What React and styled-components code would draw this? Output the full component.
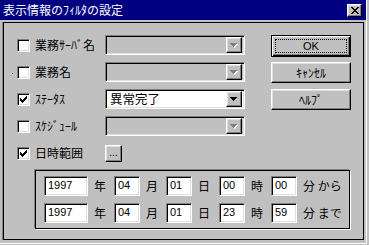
import React from 'react'
import styled, { createGlobalStyle, css } from 'styled-components'

const GlobalStyle = createGlobalStyle`
  * { box-sizing: border-box; }
  body {
    margin: 0;
    background: #c0c0c0;
    font-family: "Noto Sans CJK JP", "DejaVu Sans", sans-serif;
    font-size: 12px;
    color: #000;
  }
`

const sunken = css`
  border-top: 1px solid #808080;
  border-left: 1px solid #808080;
  border-right: 1px solid #fff;
  border-bottom: 1px solid #fff;
  box-shadow: inset 1px 1px 0 #000, inset -1px -1px 0 #dfdfdf;
`

const raised = css`
  border-top: 1px solid #fff;
  border-left: 1px solid #fff;
  border-right: 1px solid #000;
  border-bottom: 1px solid #000;
  box-shadow: inset -1px -1px 0 #808080, inset 1px 1px 0 #dfdfdf;
`

const Window = styled.div`
  width: 367px;
  height: 244px;
  background: #c0c0c0;
  border-right: 1px solid #fff;
  border-bottom: 1px solid #fff;
`

const TitleBar = styled.div`
  width: 366px;
  height: 20px;
  background: #000080;
  color: #fff;
  display: flex;
  align-items: center;
  justify-content: space-between;
  padding: 0 4px 0 3px;
  line-height: 1;
`

const TitleText = styled.span`
  font-size: 12px;
  letter-spacing: 0;
`

const CloseButton = styled.div`
  ${raised};
  width: 15px;
  height: 13px;
  background: #c0c0c0;
  display: flex;
  align-items: center;
  justify-content: center;
`

const Panel = styled.div`
  margin: 2px 0 0 3px;
  width: 361px;
  height: 218px;
  border: 1px solid #000;
  box-shadow: -1px 0 0 #808080;
  padding: 12px 0 0 13px;
`

const TopSection = styled.div`
  display: flex;
`

const FilterRows = styled.div`
  width: 228px;
  display: flex;
  flex-direction: column;
  gap: 7px;
`

const Row = styled.div`
  position: relative;
  display: flex;
  align-items: center;
  height: 20px;
`

const FocusDot = styled.span`
  position: absolute;
  left: -5px;
  top: 11px;
  width: 1px;
  height: 1px;
  background: #000;
`

const CheckBox = styled.div`
  ${sunken};
  width: 13px;
  height: 13px;
  background: #fff;
  flex: none;
  display: flex;
  align-items: center;
  justify-content: center;
`

const Label = styled.span`
  width: 70px;
  margin-left: 5px;
  line-height: 1;
  white-space: nowrap;
`

const Combo = styled.div`
  ${sunken};
  width: 140px;
  height: 20px;
  background: ${p => (p.$enabled ? '#fff' : '#c0c0c0')};
  display: flex;
  align-items: center;
  padding: 2px 2px 2px 4px;
`

const ComboText = styled.span`
  flex: 1;
  line-height: 1;
  font-size: 12.5px;
`

const ArrowButton = styled.div`
  ${raised};
  width: 16px;
  height: 16px;
  background: #c0c0c0;
  margin-left: auto;
  display: flex;
  align-items: center;
  justify-content: center;
`

const SmallButton = styled.div`
  ${raised};
  width: 17px;
  height: 17px;
  background: #c0c0c0;
  display: flex;
  align-items: flex-end;
  justify-content: center;
  padding-bottom: 3px;
  font-family: "Liberation Sans", sans-serif;
  font-size: 10px;
  line-height: 1;
`

const ButtonColumn = styled.div`
  margin-left: 26px;
  display: flex;
  flex-direction: column;
`

const PushButton = styled.div`
  ${raised};
  position: relative;
  width: 80px;
  height: 21px;
  margin-bottom: 6px;
  background: #c0c0c0;
  display: flex;
  align-items: center;
  justify-content: center;
  line-height: 1;
  font-family: ${p => (p.$latin ? '"Liberation Sans", sans-serif' : '"Noto Sans CJK JP", sans-serif')};
  font-size: ${p => (p.$latin ? '11px' : '12px')};
`

const DefaultButton = styled(PushButton)`
  height: 22px;
  margin-bottom: 5px;
  border: 1px solid #000;
  box-shadow: inset 1px 1px 0 #fff, inset -1px -1px 0 #000, inset -2px -2px 0 #808080;
  &::after {
    content: '';
    position: absolute;
    inset: 3px;
    border: 1px dotted #000;
  }
`

const DateBox = styled.div`
  margin: 7px 0 0 18px;
  width: 315px;
  height: 59px;
  border: 1px solid #000;
  box-shadow: 1px 1px 0 #fff, -1px -1px 0 #808080;
  padding: 5px 0 0 8px;
  display: flex;
  flex-direction: column;
  gap: 7px;
`

const DateRow = styled.div`
  display: flex;
  align-items: center;
  height: 20px;
`

const Field = styled.div`
  ${sunken};
  width: ${p => p.$w}px;
  height: 20px;
  background: #fff;
  padding: 3px 0 0 3px;
  font-family: "Liberation Sans", sans-serif;
  font-size: 11px;
  line-height: 1;
`

const Unit = styled.span`
  width: ${p => p.$w || 26}px;
  padding-left: 6px;
  line-height: 1;
  white-space: nowrap;
`

const Check = () => (
  <svg width="7" height="7" viewBox="0 0 7 7" shapeRendering="crispEdges">
    <path d="M6 0h1v3h-1zM5 1h1v3h-1zM4 2h1v3h-1zM0 2h1v3h-1zM1 3h1v3h-1zM2 4h1v3h-1zM3 3h1v3h-1z" fill="#000" />
  </svg>
)

const Arrow = ({ disabled }) => (
  <svg width="8" height="5" viewBox="0 0 8 5" shapeRendering="crispEdges">
    {disabled && <path d="M1 1h7v1h-7zM2 2h5v1h-5zM3 3h3v1h-3zM4 4h1v1h-1z" fill="#fff" />}
    <path d="M0 0h7v1h-7zM1 1h5v1h-5zM2 2h3v1h-3zM3 3h1v1h-1z" fill={disabled ? '#808080' : '#000'} />
  </svg>
)

const CloseIcon = () => (
  <svg width="8" height="7" viewBox="0 0 8 7" shapeRendering="crispEdges">
    <path d="M0 0h2v1h-2zM6 0h2v1h-2zM1 1h2v1h-2zM5 1h2v1h-2zM2 2h4v1h-4zM3 3h2v1h-2zM2 4h4v1h-4zM1 5h2v1h-2zM5 5h2v1h-2zM0 6h2v1h-2zM6 6h2v1h-2z" fill="#000" />
  </svg>
)

const filters = [
  { label: '業務ｻｰﾊﾞ名', checked: false },
  { label: '業務名', checked: false, focus: true },
  { label: 'ｽﾃｰﾀｽ', checked: true, value: '異常完了' },
  { label: 'ｽｹｼﾞｭｰﾙ', checked: false },
]

const dateRows = [
  { y: '1997', m: '04', d: '01', h: '00', mi: '00', tail: '分 から' },
  { y: '1997', m: '04', d: '01', h: '23', mi: '59', tail: '分 まで' },
]

export default function App() {
  return (
    <>
      <GlobalStyle />
      <Window>
        <TitleBar>
          <TitleText>表示情報のﾌｨﾙﾀの設定</TitleText>
          <CloseButton><CloseIcon /></CloseButton>
        </TitleBar>
        <Panel>
          <TopSection>
            <FilterRows>
              {filters.map(f => (
                <Row key={f.label}>
                  {f.focus && <FocusDot />}
                  <CheckBox>{f.checked && <Check />}</CheckBox>
                  <Label>{f.label}</Label>
                  <Combo $enabled={!!f.value}>
                    <ComboText>{f.value}</ComboText>
                    <ArrowButton><Arrow disabled={!f.value} /></ArrowButton>
                  </Combo>
                </Row>
              ))}
              <Row>
                <CheckBox><Check /></CheckBox>
                <Label>日時範囲</Label>
                <SmallButton>...</SmallButton>
              </Row>
            </FilterRows>
            <ButtonColumn>
              <DefaultButton $latin>OK</DefaultButton>
              <PushButton>ｷｬﾝｾﾙ</PushButton>
              <PushButton>ﾍﾙﾌﾟ</PushButton>
            </ButtonColumn>
          </TopSection>
          <DateBox>
            {dateRows.map((r, i) => (
              <DateRow key={i}>
                <Field $w={44}>{r.y}</Field>
                <Unit>年</Unit>
                <Field $w={26}>{r.m}</Field>
                <Unit>月</Unit>
                <Field $w={26}>{r.d}</Field>
                <Unit $w={27}>日</Unit>
                <Field $w={26}>{r.h}</Field>
                <Unit>時</Unit>
                <Field $w={26}>{r.mi}</Field>
                <Unit $w={50}>{r.tail}</Unit>
              </DateRow>
            ))}
          </DateBox>
        </Panel>
      </Window>
    </>
  )
}
